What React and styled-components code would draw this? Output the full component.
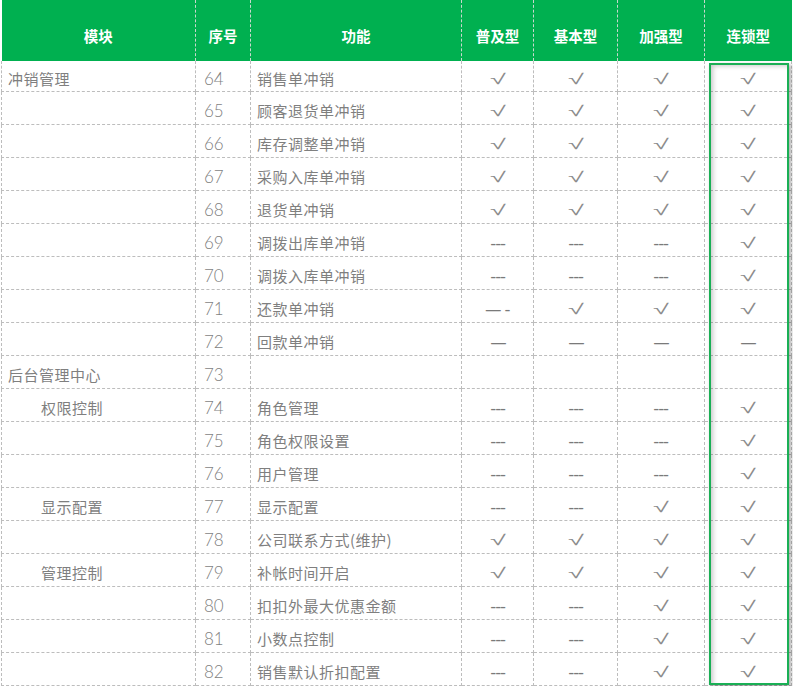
import React from "react";
import styled, { createGlobalStyle } from "styled-components";

const GlobalStyle = createGlobalStyle`
  body {
    margin: 0;
    background: #fff;
    font-family: "Noto Sans CJK SC", "Liberation Sans", sans-serif;
  }
`;

const Page = styled.div`
  position: relative;
  width: 793px;
  height: 686px;
  overflow: hidden;
  padding-left: 1px;
  box-sizing: border-box;
`;

const Table = styled.table`
  border-collapse: collapse;
  table-layout: fixed;
  width: 790px;
  font-size: 15px;
  color: #7f7f7f;
`;

const HeadRow = styled.tr`
  height: 61px;
`;

const HeadCell = styled.th`
  box-sizing: border-box;
  padding: 9px 0 0;
  background: #00b050;
  color: #fff;
  font-weight: 700;
  font-size: 14.5px;
  text-align: center;
  border-left: 1px dashed #c8d8ce;
  &:first-child {
    border-left: none;
  }
`;

const Row = styled.tr`
  height: ${(p) => (p.$first ? 30 : 33)}px;
`;

const Cell = styled.td`
  box-sizing: border-box;
  padding: 7px 0 0 ${(p) => p.$pad || 0}px;
  border: 1px dashed #bdbdbd;
  border-top: none;
  text-align: ${(p) => (p.$center ? "center" : "left")};
  white-space: nowrap;
  overflow: hidden;
  line-height: 20px;
  letter-spacing: ${(p) => (p.$num ? 0 : 0.5)}px;
  font-family: ${(p) =>
    p.$num
      ? '"Lato", "Liberation Sans", sans-serif'
      : '"Noto Sans CJK SC", sans-serif'};
  font-weight: ${(p) => (p.$num ? 300 : 400)};
  font-size: ${(p) => (p.$num ? 17 : 15)}px;
`;

const Mark = styled.span`
  display: inline-block;
  color: ${(p) => (p.$dash ? "#7a7a7a" : "#8c8c8c")};
  font-family: "DejaVu Sans", sans-serif;
  font-size: ${(p) => (p.$dash ? 15 : 18)}px;
  line-height: 20px;
  letter-spacing: ${(p) => (p.$dash ? -1 : 0)}px;
  font-weight: ${(p) => (p.$dash ? 400 : 200)};
  transform: ${(p) => (p.$dash ? "scaleX(1.1)" : "scale(1.6, 0.8)")};
`;

const Highlight = styled.div`
  position: absolute;
  left: 709px;
  top: 63px;
  width: 76px;
  height: 618px;
  border: 2px solid #1aaf55;
  box-shadow: inset 4px 3px 5px -2px rgba(0, 0, 0, 0.22),
    2px 2px 4px rgba(0, 0, 0, 0.35);
  pointer-events: none;
`;

const Y = "√";
const D = "---";
const L = "—";

const rows = [
  { mod: "冲销管理", n: 64, f: "销售单冲销", v: [Y, Y, Y, Y] },
  { n: 65, f: "顾客退货单冲销", v: [Y, Y, Y, Y] },
  { n: 66, f: "库存调整单冲销", v: [Y, Y, Y, Y] },
  { n: 67, f: "采购入库单冲销", v: [Y, Y, Y, Y] },
  { n: 68, f: "退货单冲销", v: [Y, Y, Y, Y] },
  { n: 69, f: "调拨出库单冲销", v: [D, D, D, Y] },
  { n: 70, f: "调拨入库单冲销", v: [D, D, D, Y] },
  { n: 71, f: "还款单冲销", v: ["— -", Y, Y, Y] },
  { n: 72, f: "回款单冲销", v: [L, L, L, L] },
  { mod: "后台管理中心", n: 73, f: "", v: ["", "", "", ""] },
  { mod: "权限控制", sub: true, n: 74, f: "角色管理", v: [D, D, D, Y] },
  { n: 75, f: "角色权限设置", v: [D, D, D, Y] },
  { n: 76, f: "用户管理", v: [D, D, D, Y] },
  { mod: "显示配置", sub: true, n: 77, f: "显示配置", v: [D, D, Y, Y] },
  { n: 78, f: "公司联系方式(维护)", v: [Y, Y, Y, Y] },
  { mod: "管理控制", sub: true, n: 79, f: "补帐时间开启", v: [Y, Y, Y, Y] },
  { n: 80, f: "扣扣外最大优惠金额", v: [D, D, Y, Y] },
  { n: 81, f: "小数点控制", v: [D, D, Y, Y] },
  { n: 82, f: "销售默认折扣配置", v: [D, D, Y, Y] },
];

const heads = ["模块", "序号", "功能", "普及型", "基本型", "加强型", "连锁型"];
const widths = [194, 55, 211, 72, 84, 87, 87];

export default function App() {
  return (
    <Page>
      <GlobalStyle />
      <Table>
        <colgroup>
          {widths.map((w, i) => (
            <col key={i} style={{ width: w }} />
          ))}
        </colgroup>
        <thead>
          <HeadRow>
            {heads.map((h) => (
              <HeadCell key={h}>{h}</HeadCell>
            ))}
          </HeadRow>
        </thead>
        <tbody>
          {rows.map((r, i) => (
            <Row key={r.n} $first={i === 0}>
              <Cell $pad={r.sub ? 39 : 6}>{r.mod || ""}</Cell>
              <Cell $num $pad={8}>{r.n}</Cell>
              <Cell $pad={6}>{r.f}</Cell>
              {r.v.map((v, j) => (
                <Cell key={j} $center>
                  <Mark $dash={v !== Y}>{v}</Mark>
                </Cell>
              ))}
            </Row>
          ))}
        </tbody>
      </Table>
      <Highlight />
    </Page>
  );
}
